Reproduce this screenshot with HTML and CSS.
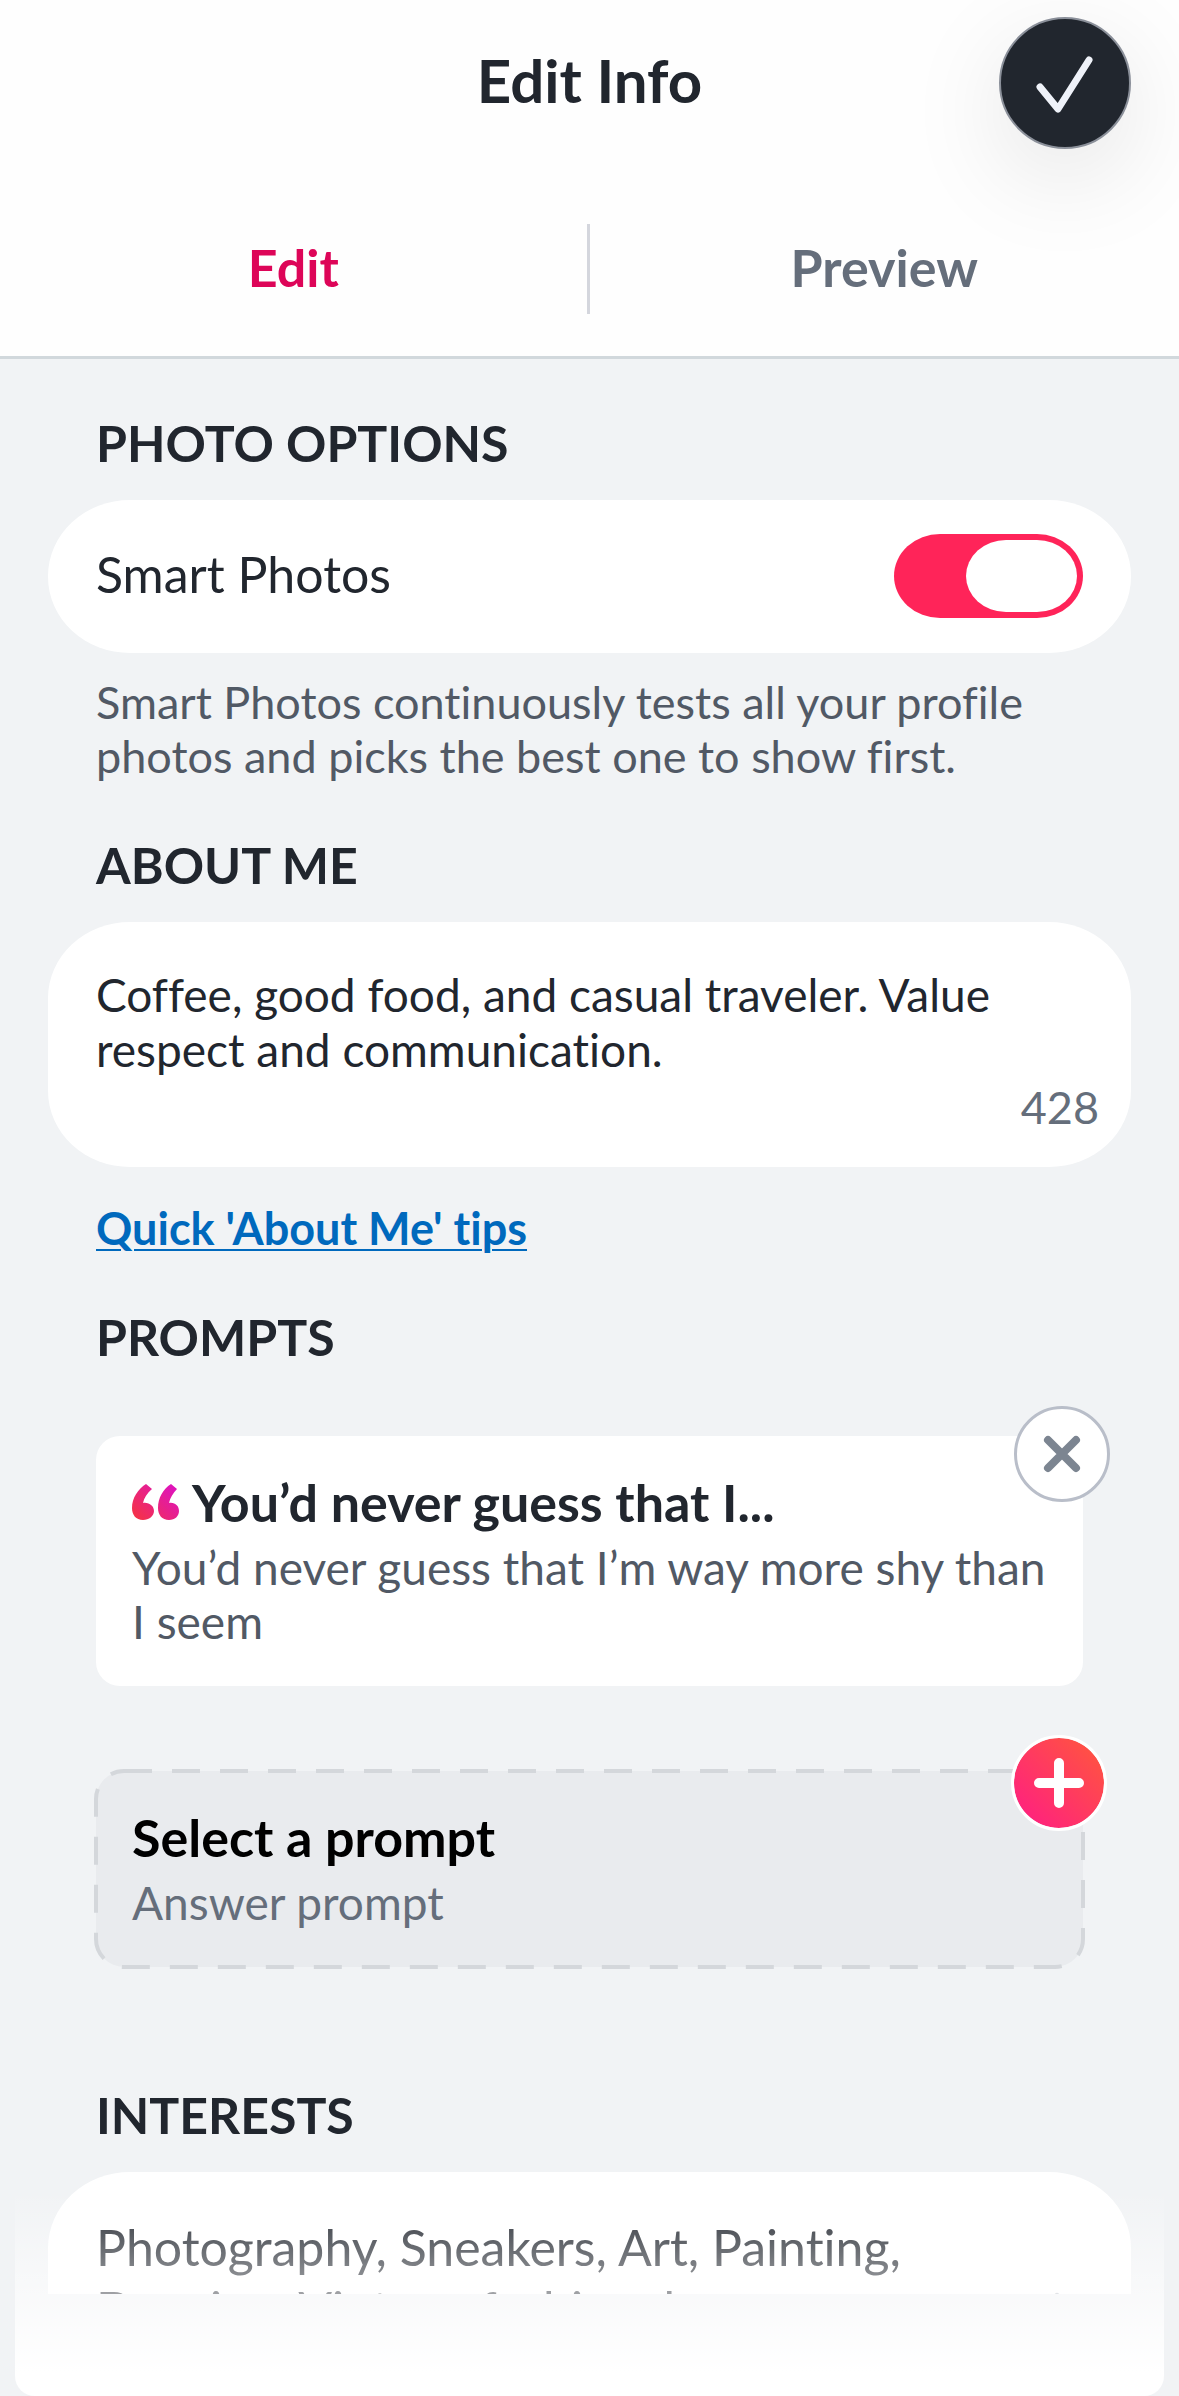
FILE: index.html
```html
<!DOCTYPE html>
<html lang="en">
<head>
<meta charset="utf-8">
<meta name="viewport" content="width=device-width, initial-scale=1">
<title>Edit Info</title>
<link rel="stylesheet" href="styles.css">
</head>
<body>
<div class="app">
  <header class="header">
    <div class="title-bar">
      <h1 class="title">Edit Info</h1>
      <button class="done" type="button" aria-label="Done">
        <svg viewBox="0 0 132 132" aria-hidden="true"><path d="M41 70 59 92 90 43" fill="none" stroke="#eff2f9" stroke-width="7" stroke-linecap="round" stroke-linejoin="round"/></svg>
      </button>
    </div>
    <nav class="tabs">
      <button class="tab tab-active" type="button">Edit</button>
      <button class="tab" type="button">Preview</button>
    </nav>
  </header>

  <main class="content">
    <section class="section">
      <h2 class="heading">PHOTO OPTIONS</h2>
      <div class="card switch-row">
        <label class="row-label" for="smart">Smart Photos</label>
        <input class="switch" id="smart" type="checkbox" role="switch" checked>
      </div>
      <p class="hint">Smart Photos continuously tests all your profile photos and picks the best one to show first.</p>
    </section>

    <section class="section">
      <h2 class="heading"><label for="about">ABOUT ME</label></h2>
      <div class="card about">
        <textarea class="about-text" id="about" rows="2">Coffee, good food, and casual traveler. Value respect and communication.</textarea>
        <span class="count">428</span>
      </div>
      <a class="tips" href="#tips">Quick 'About Me' tips</a>
    </section>

    <section class="section">
      <h2 class="heading">PROMPTS</h2>
      <article class="prompt">
        <h3 class="prompt-title">
          <svg class="quote" viewBox="0 0 48 36" aria-hidden="true">
            <defs>
              <linearGradient id="quote-fill" gradientUnits="userSpaceOnUse" x1="4" y1="36" x2="38" y2="2">
                <stop offset="0" stop-color="#f53344"/>
                <stop offset="1" stop-color="#df15b8"/>
              </linearGradient>
            </defs>
            <path fill="url(#quote-fill)" d="M14 0 20 5C15 9 12 14 11 19 17 18 22 22 22 27 22 32 17 36 11 36 4 36 0 31 0 24 0 14 6 5 14 0ZM39 0 45 5C41 9 38 14 37 19 43 18 47 22 47 27 47 32 43 36 37 36 30 36 26 31 26 24 26 14 31 5 39 0Z"/>
          </svg>
          You’d never guess that I...
        </h3>
        <p class="prompt-answer">You’d never guess that I’m way more shy than I seem</p>
        <button class="badge remove" type="button" aria-label="Remove prompt">
          <svg viewBox="0 0 96 96" aria-hidden="true"><path d="M34 34 62 62M62 34 34 62" stroke="#7c8591" stroke-width="8" stroke-linecap="round"/></svg>
        </button>
      </article>
      <div class="prompt prompt-empty">
        <svg class="dashes" aria-hidden="true"><rect width="100%" height="100%" rx="28" fill="#e9ebee" stroke="#d4d7db" stroke-width="4" stroke-dasharray="28 20"/></svg>
        <h3 class="prompt-title">Select a prompt</h3>
        <p class="prompt-answer">Answer prompt</p>
        <button class="badge add" type="button" aria-label="Add prompt">
          <svg viewBox="0 0 96 96" aria-hidden="true"><path d="M48 28V68M28 48H68" stroke="#fff" stroke-width="10" stroke-linecap="round"/></svg>
        </button>
      </div>
    </section>

    <section class="section section-last">
      <h2 class="heading">INTERESTS</h2>
      <a class="card interests" href="#interests">
        <span class="interest-list">Photography, Sneakers, Art, Painting, Dancing, Vintage fashion, house</span>
        <svg class="chevron" viewBox="0 0 30 54" aria-hidden="true"><path d="M4 4 26 27 4 50" fill="none" stroke="#b9bfc8" stroke-width="6" stroke-linecap="round" stroke-linejoin="round"/></svg>
      </a>
    </section>
  </main>
  <div class="fade"></div>
</div>
</body>
</html>
```
FILE: styles.css
```css
* {
  box-sizing: border-box;
}

body {
  margin: 0;
  background: #f1f3f5;
  color: #21262e;
  font-family: Lato, "Liberation Sans", sans-serif;
  font-size: 45px;
  font-variant-ligatures: none;
  line-height: 54px;
}

h1, h2, h3, p {
  margin: 0;
}

button, input, textarea {
  margin: 0;
  padding: 0;
  border: 0;
  background: none;
  color: inherit;
  font: inherit;
}

svg {
  display: block;
}

.app {
  position: relative;
  display: flex;
  flex-direction: column;
  height: 100vh;
  padding-bottom: 102px;
}

.header {
  flex: none;
  padding-bottom: 42px;
  border-bottom: 3px solid #d1d8dc;
  background: #fefefe;
}

.title-bar {
  display: grid;
  grid-template-columns: 1fr auto 1fr;
  align-items: center;
  padding: 17px 48px 75px;
}

.title {
  grid-column: 2;
  padding-bottom: 6px;
  font-size: 60px;
  font-weight: 700;
  line-height: 72px;
}

.done {
  justify-self: end;
  width: 132px;
  height: 132px;
  border: 2px solid #8b909a;
  border-radius: 50%;
  background: #21262e;
  box-shadow: 0 28px 100px rgb(0 0 0 / 10%);
}

.done svg {
  width: 132px;
  margin: -2px;
}

.tabs {
  display: grid;
  grid-template-columns: 1fr 1fr;
}

.tab {
  height: 90px;
  padding-bottom: 4px;
  color: #656e7b;
  font-size: 52px;
  font-weight: 700;
}

.tab-active {
  border-right: 3px solid #d4d6dd;
  color: #dd0558;
}

.content {
  flex: 1;
  min-height: 0;
  overflow-y: auto;
  padding: 54px 48px 0;
  scrollbar-width: none;
}

.section {
  margin-bottom: 52px;
}

.heading {
  margin: 0 48px 27px;
  font-size: 50px;
  font-weight: 700;
  line-height: 60px;
}

.card {
  border-radius: 82px / 76px;
  background: #fff;
}

.switch-row {
  display: flex;
  align-items: center;
  justify-content: space-between;
  padding: 34px 48px 35px;
}

.row-label {
  padding-bottom: 4px;
  font-size: 50px;
}

.switch {
  appearance: none;
  display: flex;
  justify-content: flex-end;
  width: 189px;
  height: 84px;
  padding: 6px;
  border-radius: 46px / 42px;
  background: #ff2459;
}

.switch::before {
  content: "";
  width: 111px;
  border-radius: 40px / 36px;
  background: #fff;
}

.hint {
  margin: 22px 48px 0;
  color: #515965;
}

.about {
  display: flex;
  flex-direction: column;
  padding: 45px 32px 33px 48px;
}

.about-text {
  width: 100%;
  height: 113px;
  resize: none;
  overflow: hidden;
  font-size: 46px;
  line-height: 55px;
}

.count {
  align-self: flex-end;
  color: #656e7b;
}

.tips {
  display: inline-block;
  margin: 34px 48px 0;
  color: #0069bd;
  font-weight: 700;
  text-decoration: underline;
  text-decoration-thickness: 2px;
  text-underline-offset: 4px;
}

.prompt {
  position: relative;
  margin: 69px 48px 0;
  padding: 36px 36px 37px;
  border-radius: 24px;
  background: #fff;
}

.prompt-title {
  display: flex;
  align-items: center;
  gap: 12px;
  margin-bottom: 9px;
  font-size: 52px;
  font-weight: 700;
  line-height: 60px;
}

.quote {
  width: 48px;
  height: 36px;
}

.prompt-answer {
  color: #515965;
  font-size: 46px;
}

.prompt-empty {
  margin-top: 85px;
  background: none;
  color: #000;
}

.prompt-empty .prompt-answer {
  color: #656e7b;
}

.prompt-empty > :not(.dashes, .badge) {
  position: relative;
}

.dashes {
  position: absolute;
  inset: 0;
  width: 100%;
  height: 100%;
  overflow: visible;
}

.badge {
  position: absolute;
  width: 96px;
  height: 96px;
  border-radius: 50%;
}

.badge svg {
  width: 96px;
  height: 96px;
  margin: -3px;
}

.remove {
  top: -30px;
  right: -27px;
  border: 3px solid #b9bec9;
  background: #fff;
}

.add {
  top: -36px;
  right: -24px;
  border: 3px solid #fff;
  background: linear-gradient(45deg, #ff2080 10%, #ff5440 90%) border-box;
  background-clip: padding-box;
}

.section-last {
  margin: 118px 0 0;
}

.interests {
  display: flex;
  align-items: center;
  justify-content: space-between;
  min-height: 294px;
  padding: 44px 48px;
  color: inherit;
  font-size: 50px;
  line-height: 62px;
  text-decoration: none;
}

.interest-list {
  align-self: flex-start;
  max-width: 880px;
}

.chevron {
  flex: none;
  width: 30px;
  height: 54px;
}

.fade {
  position: absolute;
  right: 15px;
  bottom: 0;
  left: 15px;
  height: 206px;
  border-radius: 0 0 20px 20px;
  background: linear-gradient(rgb(255 255 255 / 0%), #fff 182px);
  pointer-events: none;
}
```
